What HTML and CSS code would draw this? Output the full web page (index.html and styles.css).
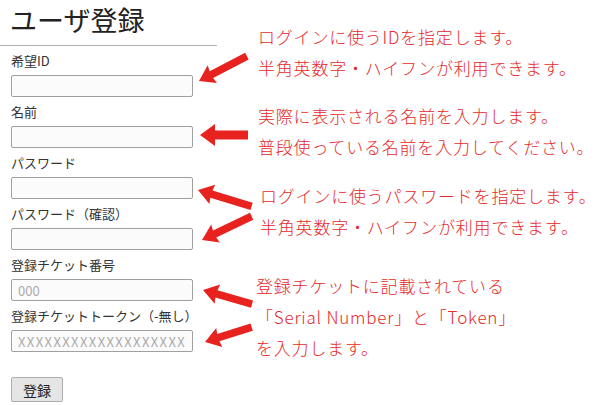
FILE: index.html
```html
<!DOCTYPE html>
<html lang="ja">
<head>
  <meta charset="UTF-8">
  <title>ユーザ登録</title>
  <link rel="stylesheet" href="styles.css">
</head>
<body>
  <div class="page">
    <div class="form-col">
      <h1>ユーザ登録</h1>
      <hr>
      <form class="form-reg">
        <label for="uid">希望ID</label>
        <input id="uid" type="text">
        <label for="uname">名前</label>
        <input id="uname" type="text">
        <label for="pw">パスワード</label>
        <input id="pw" type="password">
        <label for="pw2">パスワード（確認）</label>
        <input id="pw2" type="password">
        <label for="tno">登録チケット番号</label>
        <input id="tno" type="text" placeholder="000">
        <label for="ttoken">登録チケットトークン（-無し）</label>
        <input id="ttoken" class="token" type="text" placeholder="XXXXXXXXXXXXXXXXXXXXXXXX">
        <button type="submit" class="btn">登録</button>
      </form>
    </div>

    <!-- 説明 -->
    <div class="notes">
      <p class="note note-id">ログインに使うIDを指定します。<br>半角英数字・ハイフンが利用できます。</p>
      <p class="note note-name">実際に表示される名前を入力します。<br>普段使っている名前を入力してください。</p>
      <p class="note note-pw">ログインに使うパスワードを指定します。<br>半角英数字・ハイフンが利用できます。</p>
      <p class="note note-ticket">登録チケットに記載されている<br>「Serial Number」と「Token」<br>を入力します。</p>
    </div>

    <!-- 矢印 -->
    <svg class="arrows" width="598" height="405" viewBox="0 0 598 405">
      <g fill="#e8231f">
        <g transform="translate(199,81) rotate(-27.5)"><polygon points="0,0 15,-10 14,-3.8 54,-3.8 54,3.8 14,3.8 15,10"/></g>
        <g transform="translate(200,135)"><polygon points="0,0 15,-11 15,-4.5 48,-4.5 48,4.5 15,4.5 15,11"/></g>
        <g transform="translate(198,190) rotate(17)"><polygon points="0,0 15,-10 14,-3.8 56,-3.8 56,3.8 14,3.8 15,10"/></g>
        <g transform="translate(202,240) rotate(-25.6)"><polygon points="0,0 15,-10 14,-3.8 55,-3.8 55,3.8 14,3.8 15,10"/></g>
        <g transform="translate(203,290) rotate(16)"><polygon points="0,0 15,-10 14,-3.8 51,-3.8 51,3.8 14,3.8 15,10"/></g>
        <g transform="translate(205,342) rotate(-17.7)"><polygon points="0,0 15,-10 14,-3.8 49,-3.8 49,3.8 14,3.8 15,10"/></g>
      </g>
    </svg>
  </div>
</body>
</html>
```

FILE: styles.css
```css
body {
  margin: 0;
  background: white;
  font-family: "Noto Sans CJK JP", "Noto Sans", sans-serif;
  color: #333;
}
.page {
  position: relative;
  display: flex;
  width: 598px;
  height: 405px;
  overflow: hidden;
}
.form-col {
  width: 217px;
  flex: none;
}
h1 {
  margin: 0;
  padding-left: 10px;
  font-size: 27px;
  font-weight: normal;
  line-height: 40px;
  color: #222;
}
hr {
  margin: 5px 0 0 0;
  border: none;
  border-top: 1px solid #b0b0b0;
}
.form-reg {
  display: flex;
  flex-direction: column;
  align-items: flex-start;
  padding: 6px 0 0 11px;
}
label {
  display: block;
  font-size: 13px;
  line-height: 18px;
  white-space: nowrap;
}
input {
  width: 182px;
  height: 22px;
  margin: 5px 0 6px 0;
  padding: 0 6px;
  border: 1px solid #a0a0a0;
  border-radius: 2px;
  background: #fbfbfb;
  box-sizing: border-box;
  font-family: inherit;
  font-size: 13px;
}
input::placeholder {
  color: #aaa;
}
.token {
  letter-spacing: 1.4px;
}
.btn {
  width: 52px;
  height: 25px;
  margin-top: 19px;
  padding: 0;
  border: 1px solid #adadad;
  border-radius: 2px;
  background: #e5e5e5;
  font-family: inherit;
  font-size: 14px;
  color: #222;
}
.notes {
  padding: 21px 0 0 41px;
}
.note {
  margin: 0;
  font-size: 17px;
  font-weight: 300;
  line-height: 31px;
  letter-spacing: 0.8px;
  color: #e62a2a;
  white-space: nowrap;
}
.note-name {
  margin-top: 17px;
}
.note-pw {
  margin-top: 18px;
  margin-left: 2px;
}
.note-ticket {
  margin-top: 28px;
  margin-left: -2px;
}
.arrows {
  position: absolute;
  top: 0;
  left: 0;
  pointer-events: none;
}
```
